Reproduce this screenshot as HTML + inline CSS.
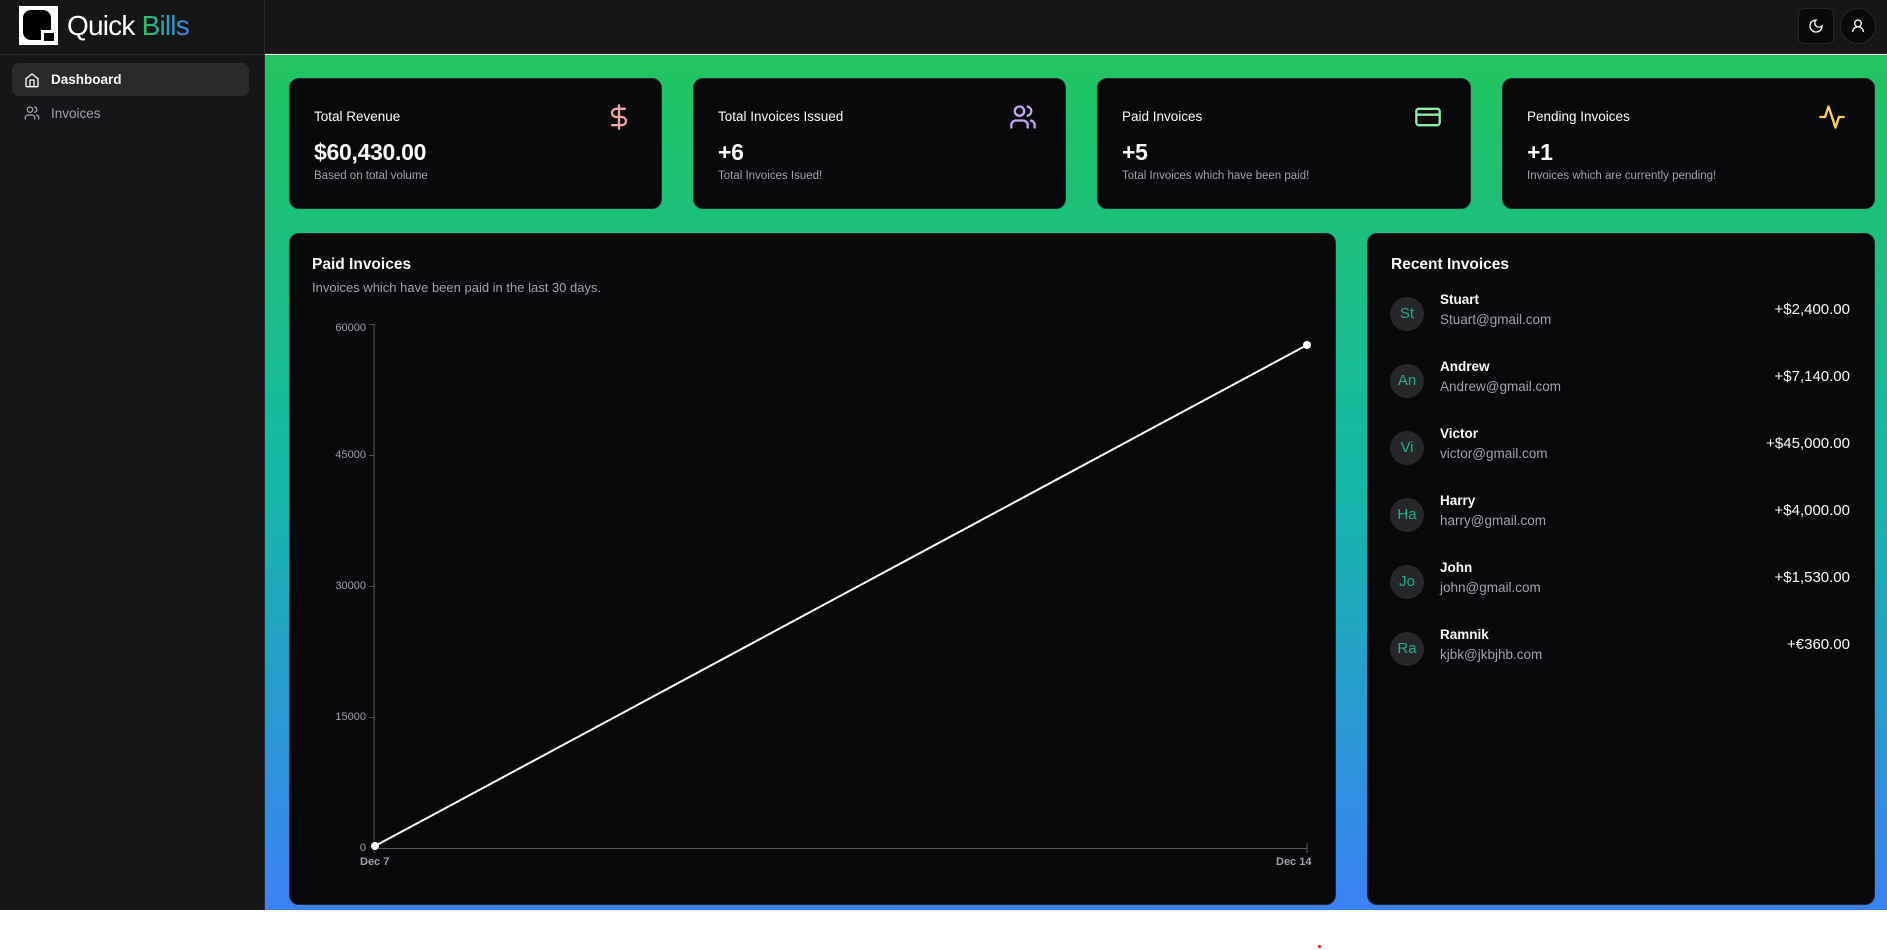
<!DOCTYPE html>
<html><head><meta charset="utf-8"><style>
*{box-sizing:border-box;margin:0;padding:0}
body{width:1887px;height:950px;background:#fff;font-family:"Liberation Sans",Arial,sans-serif;position:relative;overflow:hidden;color:#fafafa}
.abs{position:absolute}
#side{left:0;top:0;width:265px;height:910px;background:#161618;border-right:1px solid #2a2a2d}
#head{left:265px;top:0;width:1622px;height:54px;background:#161618;border-bottom:1px solid #2a2a2d}
#main{left:265px;top:55px;width:1622px;height:855px;background:linear-gradient(#22c55e 0%,#14b8a6 50%,#3b82f6 100%)}
.card{position:absolute;background:#09090b;border:1px solid #27272a;border-radius:10px}
.t{font-size:13.5px;color:#fafafa;margin-top:0}
.v{font-size:23px;font-weight:bold;margin-top:15px;letter-spacing:-0.3px}
.s{font-size:11.5px;color:#a1a1aa;margin-top:4px}
.ic{position:absolute;right:28px;top:24px}
.row{position:absolute;left:0;width:100%;height:40px}
.av{position:absolute;left:22px;top:0;width:34px;height:34px;border-radius:50%;background:#27272a;font-size:15px;line-height:34px;text-align:center;color:#1fae8a}
.nm{position:absolute;left:72px;top:-5px;font-size:13.5px;font-weight:bold;color:#fafafa}
.em{position:absolute;left:72px;top:15px;font-size:13.5px;color:#a1a1aa}
.am{position:absolute;right:24px;top:4px;font-size:15px;color:#fafafa}
.yl{position:absolute;font-size:11px;color:#a1a1aa;width:60px;text-align:right;left:306px}
</style></head><body>
<div id="side" class="abs">
  <div class="abs" style="left:19px;top:6px;width:39px;height:39px;background:#fff"></div>
  <div class="abs" style="left:23px;top:10px;width:28px;height:30px;background:#000;border-radius:8px 8px 2px 8px"></div>
  <div class="abs" style="left:41px;top:30px;width:14px;height:12px;background:#fff"></div>
  <div class="abs" style="left:44px;top:33px;width:10px;height:8px;background:#000"></div>
  <div class="abs" style="left:67px;top:7px;font-size:28px;line-height:38px;letter-spacing:-0.8px"><span style="color:#fff">Quick</span> <span style="background:linear-gradient(90deg,#22c55e,#3b82f6);-webkit-background-clip:text;color:transparent">Bills</span></div>
  <div class="abs" style="top:54px;left:0;width:265px;border-top:1px solid #2a2a2d"></div>
  <div class="abs" style="left:12px;top:63px;width:237px;height:33px;background:#2a2a2d;border-radius:7px"></div>
  <svg class="abs" style="left:24px;top:72px" width="16" height="16" viewBox="0 0 24 24" fill="none" stroke="#fafafa" stroke-width="2" stroke-linecap="round" stroke-linejoin="round"><path d="M3 10l9-7 9 7v11a1 1 0 0 1-1 1H4a1 1 0 0 1-1-1z"/><path d="M9 22V12h6v10"/></svg>
  <div class="abs" style="left:51px;top:72px;font-size:13.5px;font-weight:bold;color:#fafafa">Dashboard</div>
  <svg class="abs" style="left:24px;top:105px" width="16" height="16" viewBox="0 0 24 24" fill="none" stroke="#a1a1aa" stroke-width="2" stroke-linecap="round"><circle cx="9" cy="7" r="4"/><path d="M2 21v-2a4 4 0 0 1 4-4h6a4 4 0 0 1 4 4v2M16 3.1a4 4 0 0 1 0 7.8M22 21v-2a4 4 0 0 0-3-3.9"/></svg>
  <div class="abs" style="left:51px;top:106px;font-size:13.5px;color:#a1a1aa">Invoices</div>
</div>
<div id="head" class="abs">
  <div class="abs" style="left:1533px;top:8px;width:36px;height:36px;border:1px solid #27272a;border-radius:6px;background:#09090b"></div>
  <svg class="abs" style="left:1543px;top:18px" width="16" height="16" viewBox="0 0 24 24" fill="none" stroke="#fafafa" stroke-width="2"><path d="M12 3a6 6 0 0 0 9 9 9 9 0 1 1-9-9z"/></svg>
  <div class="abs" style="left:1575px;top:8px;width:36px;height:36px;border:1px solid #27272a;border-radius:50%;background:#09090b"></div>
  <svg class="abs" style="left:1585px;top:18px" width="16" height="16" viewBox="0 0 24 24" fill="none" stroke="#fafafa" stroke-width="2"><circle cx="12" cy="8" r="5"/><path d="M20 21a8 8 0 0 0-16 0"/></svg>
</div>
<div id="main" class="abs"></div>

<div class="card" style="left:289px;top:78px;width:373px;height:131px;padding:30px 24px">
  <div class="t">Total Revenue</div><div class="v">$60,430.00</div><div class="s">Based on total volume</div>
  <svg class="ic" width="28" height="28" viewBox="0 0 24 24" fill="none" stroke="#f4a4a4" stroke-width="2" stroke-linecap="round"><path d="M12 2v20M17 5H9.5a3.5 3.5 0 0 0 0 7h5a3.5 3.5 0 0 1 0 7H6"/></svg>
</div>
<div class="card" style="left:693px;top:78px;width:373px;height:131px;padding:30px 24px">
  <div class="t">Total Invoices Issued</div><div class="v">+6</div><div class="s">Total Invoices Isued!</div>
  <svg class="ic" width="28" height="28" viewBox="0 0 24 24" fill="none" stroke="#c4a8f0" stroke-width="2" stroke-linecap="round"><circle cx="9" cy="7" r="4"/><path d="M2 21v-2a4 4 0 0 1 4-4h6a4 4 0 0 1 4 4v2M16 3.1a4 4 0 0 1 0 7.8M22 21v-2a4 4 0 0 0-3-3.9"/></svg>
</div>
<div class="card" style="left:1097px;top:78px;width:374px;height:131px;padding:30px 24px">
  <div class="t">Paid Invoices</div><div class="v">+5</div><div class="s">Total Invoices which have been paid!</div>
  <svg class="ic" width="28" height="28" viewBox="0 0 24 24" fill="none" stroke="#86efac" stroke-width="2"><rect x="2" y="5" width="20" height="14" rx="2"/><path d="M2 10h20"/></svg>
</div>
<div class="card" style="left:1502px;top:78px;width:373px;height:131px;padding:30px 24px">
  <div class="t">Pending Invoices</div><div class="v">+1</div><div class="s">Invoices which are currently pending!</div>
  <svg class="ic" width="28" height="28" viewBox="0 0 24 24" fill="none" stroke="#fcd34d" stroke-width="2" stroke-linecap="round" stroke-linejoin="round"><path d="M22 12h-4l-3 9L9 3l-3 9H2"/></svg>
</div>

<div class="card" style="left:289px;top:233px;width:1047px;height:672px"></div>
<div class="abs" style="left:312px;top:256px;font-size:15.5px;font-weight:bold">Paid Invoices</div>
<div class="abs" style="left:312px;top:280px;font-size:13px;color:#a1a1aa">Invoices which have been paid in the last 30 days.</div>
<svg class="abs" style="left:0;top:0" width="1887" height="950">
  <path d="M369 324.5H374V848.5H1307V843" fill="none" stroke="#555" stroke-width="1"/>
  <g stroke="#555"><path d="M369 455.5h5M369 586.5h5M369 717.5h5M374 848v5M1307 848v5"/></g>
  <path d="M375 846L1307 345" stroke="#fff" stroke-width="2" fill="none"/>
  <circle cx="375" cy="846" r="4" fill="#fff"/><circle cx="1307" cy="345" r="4" fill="#fff"/>
</svg>
<div class="yl" style="top:322px">60000</div>
<div class="yl" style="top:449px">45000</div>
<div class="yl" style="top:580px">30000</div>
<div class="yl" style="top:711px">15000</div>
<div class="yl" style="top:842px">0</div>
<div class="abs" style="left:360px;top:856px;font-size:11px;color:#a1a1aa;font-weight:bold">Dec 7</div>
<div class="abs" style="left:1276px;top:856px;font-size:11px;color:#a1a1aa;font-weight:bold">Dec 14</div>

<div class="card" style="left:1367px;top:233px;width:508px;height:672px">
  <div class="abs" style="left:23px;top:22px;font-size:15.5px;font-weight:bold">Recent Invoices</div>
  <div class="row" style="top:63px"><div class="av">St</div><div class="nm">Stuart</div><div class="em">Stuart@gmail.com</div><div class="am">+$2,400.00</div></div>
  <div class="row" style="top:130px"><div class="av">An</div><div class="nm">Andrew</div><div class="em">Andrew@gmail.com</div><div class="am">+$7,140.00</div></div>
  <div class="row" style="top:197px"><div class="av">Vi</div><div class="nm">Victor</div><div class="em">victor@gmail.com</div><div class="am">+$45,000.00</div></div>
  <div class="row" style="top:264px"><div class="av">Ha</div><div class="nm">Harry</div><div class="em">harry@gmail.com</div><div class="am">+$4,000.00</div></div>
  <div class="row" style="top:331px"><div class="av">Jo</div><div class="nm">John</div><div class="em">john@gmail.com</div><div class="am">+$1,530.00</div></div>
  <div class="row" style="top:398px"><div class="av">Ra</div><div class="nm">Ramnik</div><div class="em">kjbk@jkbjhb.com</div><div class="am">+€360.00</div></div>
</div>
<div class="abs" style="left:1318px;top:945px;width:3px;height:3px;background:#e00;border-radius:50%"></div>
</body></html>
